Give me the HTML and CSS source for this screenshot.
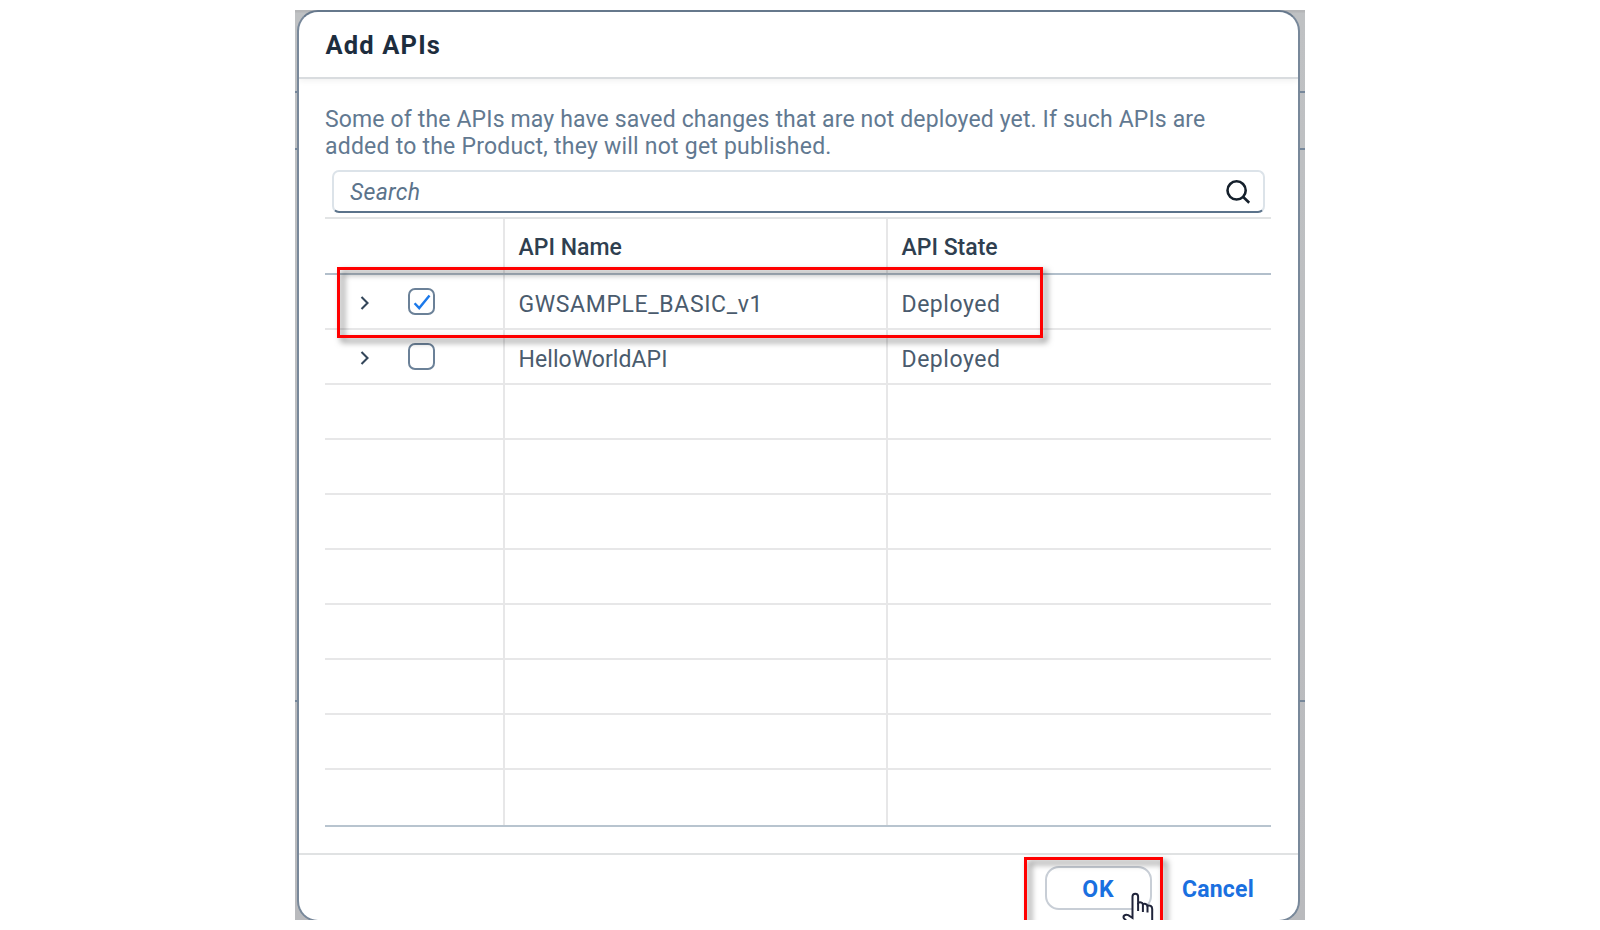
FILE: index.html
```html
<!DOCTYPE html>
<html lang="en">
<head>
<meta charset="utf-8">
<title>Add APIs</title>
<link rel="stylesheet" href="styles.css">
</head>
<body>
<main class="backdrop">
  <section class="dialog">
    <header class="dialog-header"><h1>Add APIs</h1></header>
    <div class="dialog-body">
      <p class="note">Some of the APIs may have saved changes that are not deployed yet. If such APIs are<br><span class="note-end">added to the Product, they will not get published.</span></p>
      <div class="search">
        <span class="placeholder">Search</span>
        <svg class="search-icon" width="26" height="26" viewBox="0 0 26 26"><circle cx="11.6" cy="11.4" r="9.1"/><path d="M18 17.800l6.200 6"/></svg>
      </div>
      <div class="table">
        <div class="row head"><div class="cell"></div><div class="cell name">API Name</div><div class="cell state">API State</div></div>
        <div class="row">
          <div class="cell tools"><svg class="chevron" width="10" height="16" viewBox="0 0 10 16"><path d="M1.5 2l6 6-6 6"/></svg><span class="check"><svg width="24" height="24" viewBox="0 0 24 24"><path d="M4.6 13.2l4.600 4.900L19.500 5.500"/></svg></span></div>
          <div class="cell sample">GWSAMPLE_BASIC_v1</div><div class="cell deployed">Deployed</div>
        </div>
        <div class="row">
          <div class="cell tools"><svg class="chevron" width="10" height="16" viewBox="0 0 10 16"><path d="M1.5 2l6 6-6 6"/></svg><span class="check"></span></div>
          <div class="cell hello">HelloWorldAPI</div><div class="cell deployed">Deployed</div>
        </div>
        <div class="row"><div class="cell"></div><div class="cell"></div><div class="cell"></div></div>
        <div class="row"><div class="cell"></div><div class="cell"></div><div class="cell"></div></div>
        <div class="row"><div class="cell"></div><div class="cell"></div><div class="cell"></div></div>
        <div class="row"><div class="cell"></div><div class="cell"></div><div class="cell"></div></div>
        <div class="row"><div class="cell"></div><div class="cell"></div><div class="cell"></div></div>
        <div class="row"><div class="cell"></div><div class="cell"></div><div class="cell"></div></div>
        <div class="row"><div class="cell"></div><div class="cell"></div><div class="cell"></div></div>
        <div class="row last"><div class="cell"></div><div class="cell"></div><div class="cell"></div></div>
      </div>
    </div>
    <footer class="dialog-footer">
      <button class="ok">OK</button>
      <button class="cancel">Cancel</button>
    </footer>
  </section>
  <div class="edge-line first"></div>
  <div class="edge-line second"></div>
  <div class="edge-line third"></div>
  <div class="callout row-callout"></div>
  <div class="callout ok-callout"></div>
  <svg class="cursor" width="34" height="42" viewBox="0 0 34 42"><path d="M10.500 25V5.500a2.800 2.800 0 0 1 5.600 0V12c1.800-1.200 4.300-.6 4.800 1.200 1.800-.9 4-.1 4.500 1.500 2.400-.9 4.800.4 4.800 3.300V40H9C7.500 35 5.500 30 2 27.500c-1.500-2.500 1.200-4.700 4.300-3.300L10.500 27z"/><path d="M16.100 12v8M20.900 13v8M25.500 14.500v7"/></svg>
</main>
</body>
</html>
```
FILE: styles.css
```css
* { box-sizing: border-box; }
body { margin: 0; background: #fff; font: 23px/27px Roboto, "Noto Sans", sans-serif; color: #4a5b6d; }
.backdrop { position: relative; width: 1010px; height: 910px; margin: 10px 0 0 295px; padding: 0 5px 0 2px; overflow: hidden; background: linear-gradient(#b5b6b8 0, #b5b6b8 2px, #bfc1c3 3px, #b9babd); }
.dialog { display: flex; flex-direction: column; height: 912px; overflow: hidden; border: 2px solid #78889a; border-top-color: #66788c; border-radius: 21px; background: #fff; }
.dialog-header { height: 67px; flex: none; padding: 18px 26.500px 0; border-bottom: 2px solid #d9dcdf; box-shadow: 0 2px 6px #0000000f; }
h1 { margin: 0; font-size: 25.500px; line-height: 30px; font-weight: 700; letter-spacing: 1.150px; color: #1d2d3e; }
.dialog-body { height: 774px; flex: none; padding: 26.500px 27px 0 26px; }
.note { margin: 0; height: 64px; line-height: 27px; letter-spacing: .14px; white-space: nowrap; color: #627991; }
.note-end { letter-spacing: .22px; }
.search { display: flex; align-items: center; justify-content: space-between; height: 43px; margin: 0 6.500px 4px 7px; padding: 0 12px 0 16px; border: 2px solid #dce3e9; border-bottom: 2px solid #5b738b; border-radius: 7px; }
.placeholder { font-style: italic; letter-spacing: .3px; padding-top: 2px; color: #5b738b; }
.search-icon { fill: none; stroke: #15202c; stroke-width: 2.600; margin-top: 1px; }
.table { border-top: 2px solid #e2e4e5; }
.row { display: grid; grid-template-columns: 180px 383px 1fr; height: 55px; border-bottom: 2px solid #e7e7e8; }
.head { height: 56px; border-bottom-color: #b2bfcb; font-weight: 500; color: #2f3f50; }
.last { height: 57px; border-bottom-color: #b8c4cf; }
.cell { display: flex; align-items: center; padding: 6px 0 0 13.500px; border-right: 2px solid #e7e7e8; }
.cell:last-child { border-right: 0; }
.name, .state { padding-top: 4px; }
.sample { letter-spacing: .63px; }
.hello { letter-spacing: .06px; }
.deployed { letter-spacing: .54px; }
.tools { gap: 38px; padding: 1px 0 0 35px; }
.chevron { fill: none; stroke: #33465a; stroke-width: 2.100; margin-top: 3px; }
.check { display: block; width: 27px; height: 27px; border: 2px solid #6b8198; border-radius: 7px; }
.check svg { display: block; fill: none; stroke: #1c79ea; stroke-width: 2.400; }
.dialog-footer { display: flex; flex: 1; align-items: flex-start; gap: 16px; padding: 11px 0 0 746px; border-top: 2px solid #e0e2e3; }
button { height: 44px; padding: 2px 0 0; border: 2px solid #c8ced6; border-radius: 14px; background: #fff; font: 700 23px/27px Roboto, "Noto Sans", sans-serif; color: #1a70e0; }
.ok { width: 107px; letter-spacing: 1px; }
.cancel { width: 100px; border-color: transparent; letter-spacing: .2px; }
.edge-line { position: absolute; left: 0; right: 0; height: 2px; background: linear-gradient(90deg, #76879a 2px, transparent 2px calc(100% - 6px), #76879a calc(100% - 6px)); }
.first { top: 81px; }
.second { top: 138px; }
.third { top: 690px; }
.callout { position: absolute; border: 3px solid #f00; filter: drop-shadow(4px 4px 3px #0008); }
.row-callout { left: 42px; top: 257px; width: 706px; height: 71px; }
.ok-callout { left: 729px; top: 847px; width: 139px; height: 80px; }
.cursor { position: absolute; left: 827px; top: 881px; fill: #fff; stroke: #20243a; stroke-width: 2; }
```
